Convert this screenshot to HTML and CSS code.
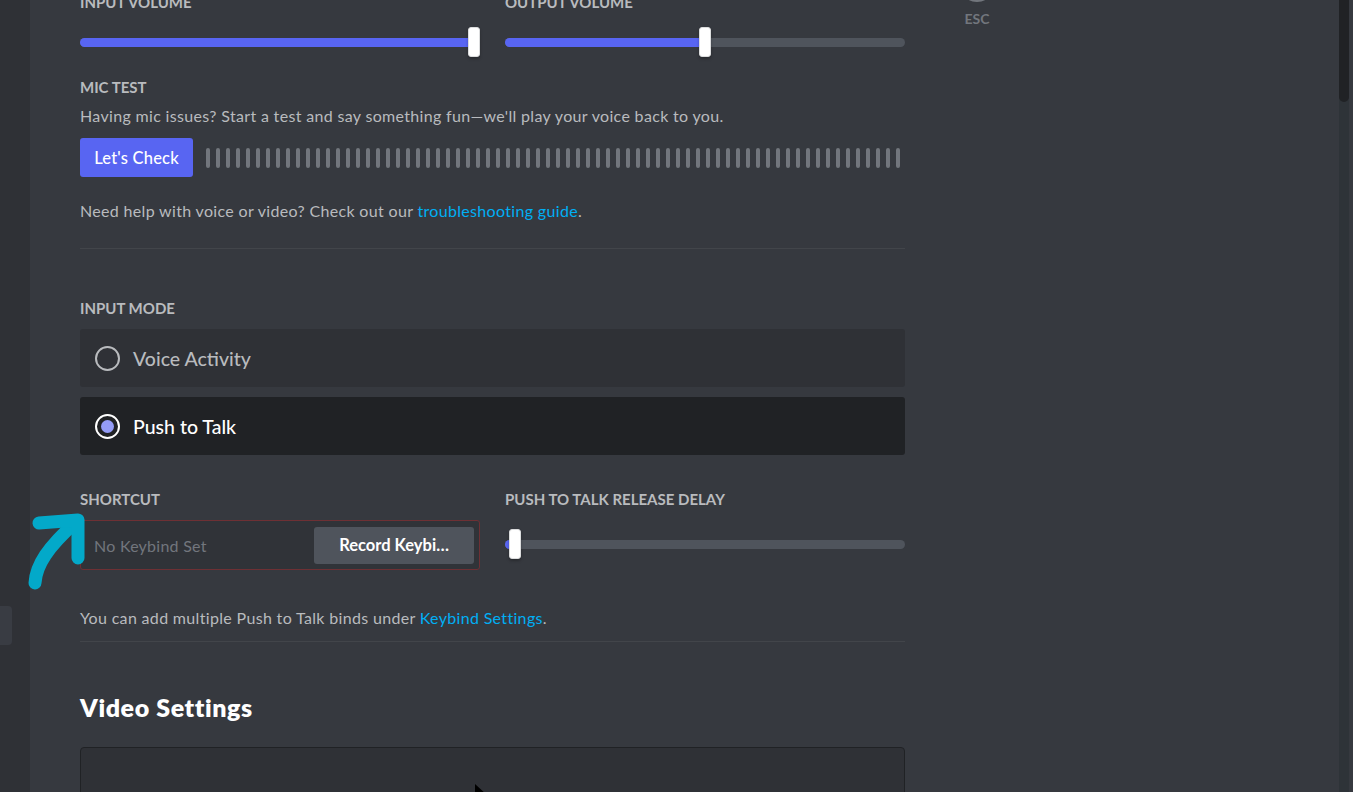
FILE: index.html
```html
<!DOCTYPE html>
<html lang="en">
<head>
<meta charset="UTF-8" />
<meta name="viewport" content="width=device-width, initial-scale=1" />
<title>Voice &amp; Video</title>
<link rel="stylesheet" href="styles.css">
</head>
<body>
  <div class="sidebar">
    <div class="sidebar-item"></div>
  </div>

  <div class="main">
    <div class="content">
      <div class="columns">
        <div class="column">
          <h5 class="label">Input Volume</h5>
          <div class="slider" style="--value: 98.5%">
            <div class="track"><div class="fill"></div></div>
            <div class="knob"></div>
          </div>
        </div>
        <div class="column">
          <h5 class="label">Output Volume</h5>
          <div class="slider" style="--value: 50%">
            <div class="track"><div class="fill"></div></div>
            <div class="knob"></div>
          </div>
        </div>
      </div>

      <h5 class="label mic-label">Mic Test</h5>
      <div class="description">Having mic issues? Start a test and say something fun—we'll play your voice back to you.</div>
      <div class="mic-row">
        <button class="button-brand">Let's Check</button>
        <div class="mic-bars" id="micBars"></div>
      </div>
      <div class="help-text">Need help with voice or video? Check out our <a href="#">troubleshooting guide</a>.</div>

      <div class="divider first-divider"></div>

      <h5 class="label mode-label">Input Mode</h5>
      <div class="radio-group">
        <div class="radio-item">
          <span class="radio"></span>
          <span class="radio-text">Voice Activity</span>
        </div>
        <div class="radio-item selected">
          <span class="radio"></span>
          <span class="radio-text">Push to Talk</span>
        </div>
      </div>

      <div class="columns shortcut-row">
        <div class="column">
          <h5 class="label">Shortcut</h5>
          <div class="keybind">
            <span class="keybind-placeholder">No Keybind Set</span>
            <button class="button-grey">Record Keybi…</button>
          </div>
        </div>
        <div class="column">
          <h5 class="label">Push to Talk Release Delay</h5>
          <div class="slider delay-slider" style="--value: 2.5%">
            <div class="track"><div class="fill"></div></div>
            <div class="knob"></div>
          </div>
        </div>
      </div>

      <div class="help-text keybind-note">You can add multiple Push to Talk binds under <a href="#">Keybind Settings</a>.</div>

      <div class="divider second-divider"></div>

      <h2 class="section-title">Video Settings</h2>
      <div class="video-preview">
        <svg class="cursor" width="14" height="20" viewBox="0 0 14 20">
          <path d="M1 1 L1 17 L5 13 L8 19 L10 18 L7 12 L13 12 Z" fill="#000" />
        </svg>
      </div>
    </div>

    <div class="tools">
      <div class="close-circle"></div>
      <div class="esc">ESC</div>
    </div>

    <div class="scrollbar">
      <div class="thumb"></div>
    </div>
  </div>

  <svg class="annotation" width="100" height="100" viewBox="0 0 100 100">
    <path d="M35 83 C36 65 48 47 76 22" />
    <path d="M39 23 L78 20 L78 58" />
  </svg>

<script>
  // mic test level meter, 70 idle bars
  const bars = document.getElementById('micBars');
  for (let i = 0; i < 70; i++) {
    const bar = document.createElement('span');
    bar.className = 'mic-bar';
    bars.appendChild(bar);
  }
</script>
</body>
</html>
```

FILE: styles.css
```css
body {
  margin: 0;
  height: 100vh;
  overflow: hidden;
  display: flex;
  background-color: #36393f;
  color: #b9bbbe;
  font-family: 'Lato', 'Noto Sans', sans-serif;
}

.sidebar {
  width: 30px;
  flex-shrink: 0;
  background-color: #2f3136;
}
.sidebar-item {
  margin-top: 606px;
  width: 12px;
  height: 39px;
  background-color: #393c43;
  border-radius: 0 4px 4px 0;
}

.main {
  flex: 1;
  display: flex;
}
.content {
  width: 825px;
  margin-left: 50px;
  margin-top: -8px;
}

.columns {
  display: flex;
  gap: 25px;
}
.column {
  width: 400px;
}

.label {
  margin: 0;
  font-size: 15px;
  line-height: 20px;
  font-weight: 700;
  text-transform: uppercase;
  color: #b9bbbe;
}

/* sliders */
.slider {
  position: relative;
  display: flex;
  align-items: center;
  height: 30px;
  margin-top: 15px;
}
.track {
  flex: 1;
  height: 9px;
  border-radius: 5px;
  background-color: #4f545c;
  overflow: hidden;
}
.fill {
  width: var(--value);
  height: 100%;
  background-color: #5865f2;
}
.knob {
  position: absolute;
  top: 0;
  left: calc(var(--value) - 6px);
  width: 10px;
  height: 28px;
  background-color: #fff;
  border: 1px solid #dcddde;
  border-radius: 3px;
  box-shadow: 0 2px 3px rgba(0, 0, 0, 0.25);
}

/* mic test */
.mic-label {
  margin-top: 20px;
}
.description {
  margin-top: 9px;
  font-size: 16px;
  line-height: 20px;
  letter-spacing: 0.33px;
}
.mic-row {
  display: flex;
  align-items: center;
  margin-top: 12px;
}
.button-brand {
  width: 113px;
  height: 39px;
  border: none;
  border-radius: 3px;
  background-color: #5865f2;
  color: #fff;
  font-family: inherit;
  font-size: 16.5px;
  font-weight: 500;
  letter-spacing: 0.2px;
  cursor: pointer;
}
.mic-bars {
  display: flex;
  gap: 6px;
  margin-left: 13px;
}
.mic-bar {
  width: 4px;
  height: 20px;
  border-radius: 2px;
  background-color: #72767d;
}

.help-text {
  margin-top: 24px;
  font-size: 16px;
  line-height: 20px;
  letter-spacing: 0.33px;
}
.help-text a {
  color: #00aff4;
  text-decoration: none;
}

.divider {
  height: 1px;
  background-color: #42454a;
}
.first-divider {
  margin-top: 27px;
}

/* input mode */
.mode-label {
  margin-top: 49px;
}
.radio-group {
  display: flex;
  flex-direction: column;
  gap: 10px;
  margin-top: 11px;
}
.radio-item {
  display: flex;
  align-items: center;
  height: 58px;
  padding-left: 15px;
  border-radius: 3px;
  background-color: #2f3136;
  box-sizing: border-box;
}
.radio {
  width: 21px;
  height: 21px;
  border: 2px solid #b9bbbe;
  border-radius: 50%;
  box-sizing: content-box;
  display: flex;
  align-items: center;
  justify-content: center;
}
.radio-text {
  margin-left: 13px;
  font-size: 19.5px;
  font-weight: 500;
  color: #b9bbbe;
}
.radio-item.selected {
  background-color: #202225;
}
.radio-item.selected .radio {
  border-color: #fff;
}
.radio-item.selected .radio::after {
  content: "";
  width: 13px;
  height: 13px;
  border-radius: 50%;
  background-color: #949cf7;
}
.radio-item.selected .radio-text {
  color: #fff;
}

/* shortcut */
.shortcut-row {
  margin-top: 34px;
}
.keybind {
  display: flex;
  align-items: center;
  justify-content: space-between;
  height: 50px;
  margin-top: 11px;
  padding: 0 5px 0 13px;
  border: 1px solid #6e3034;
  border-radius: 3px;
  background-color: #303338;
  box-sizing: border-box;
}
.keybind-placeholder {
  font-size: 16px;
  letter-spacing: 0.25px;
  color: #72767d;
}
.button-grey {
  width: 160px;
  height: 37px;
  border: none;
  border-radius: 3px;
  background-color: #4f545c;
  color: #fff;
  font-family: inherit;
  font-size: 16.5px;
  font-weight: 700;
  cursor: pointer;
}
.delay-slider {
  margin-top: 20px;
}

.keybind-note {
  margin-top: 38px;
}
.second-divider {
  margin-top: 13px;
}

.section-title {
  margin: 50px 0 0;
  font-size: 25px;
  line-height: 30px;
  font-weight: 800;
  letter-spacing: 0.6px;
  color: #fff;
}
.video-preview {
  position: relative;
  height: 320px;
  margin-top: 25px;
  border: 1px solid #202225;
  border-radius: 4px;
  background-color: #2f3136;
}
.cursor {
  position: absolute;
  top: 35px;
  left: 393px;
}

/* esc button */
.tools {
  width: 36px;
  margin-left: 54px;
  margin-top: -34px;
  display: flex;
  flex-direction: column;
  align-items: center;
  flex-shrink: 0;
}
.close-circle {
  width: 32px;
  height: 32px;
  border: 2px solid #72767d;
  border-radius: 50%;
}
.esc {
  margin-top: 8px;
  font-size: 14px;
  font-weight: 700;
  color: #72767d;
}

.scrollbar {
  margin-left: auto;
  margin-right: 4px;
  width: 10px;
  background-color: #2e3338;
  flex-shrink: 0;
}
.thumb {
  height: 102px;
  border-radius: 0 0 5px 5px;
  background-color: #202225;
}

.annotation {
  position: absolute;
  left: 0;
  top: 500px;
  fill: none;
  stroke: #03a9c9;
  stroke-width: 13;
  stroke-linecap: round;
  stroke-linejoin: round;
}
```
